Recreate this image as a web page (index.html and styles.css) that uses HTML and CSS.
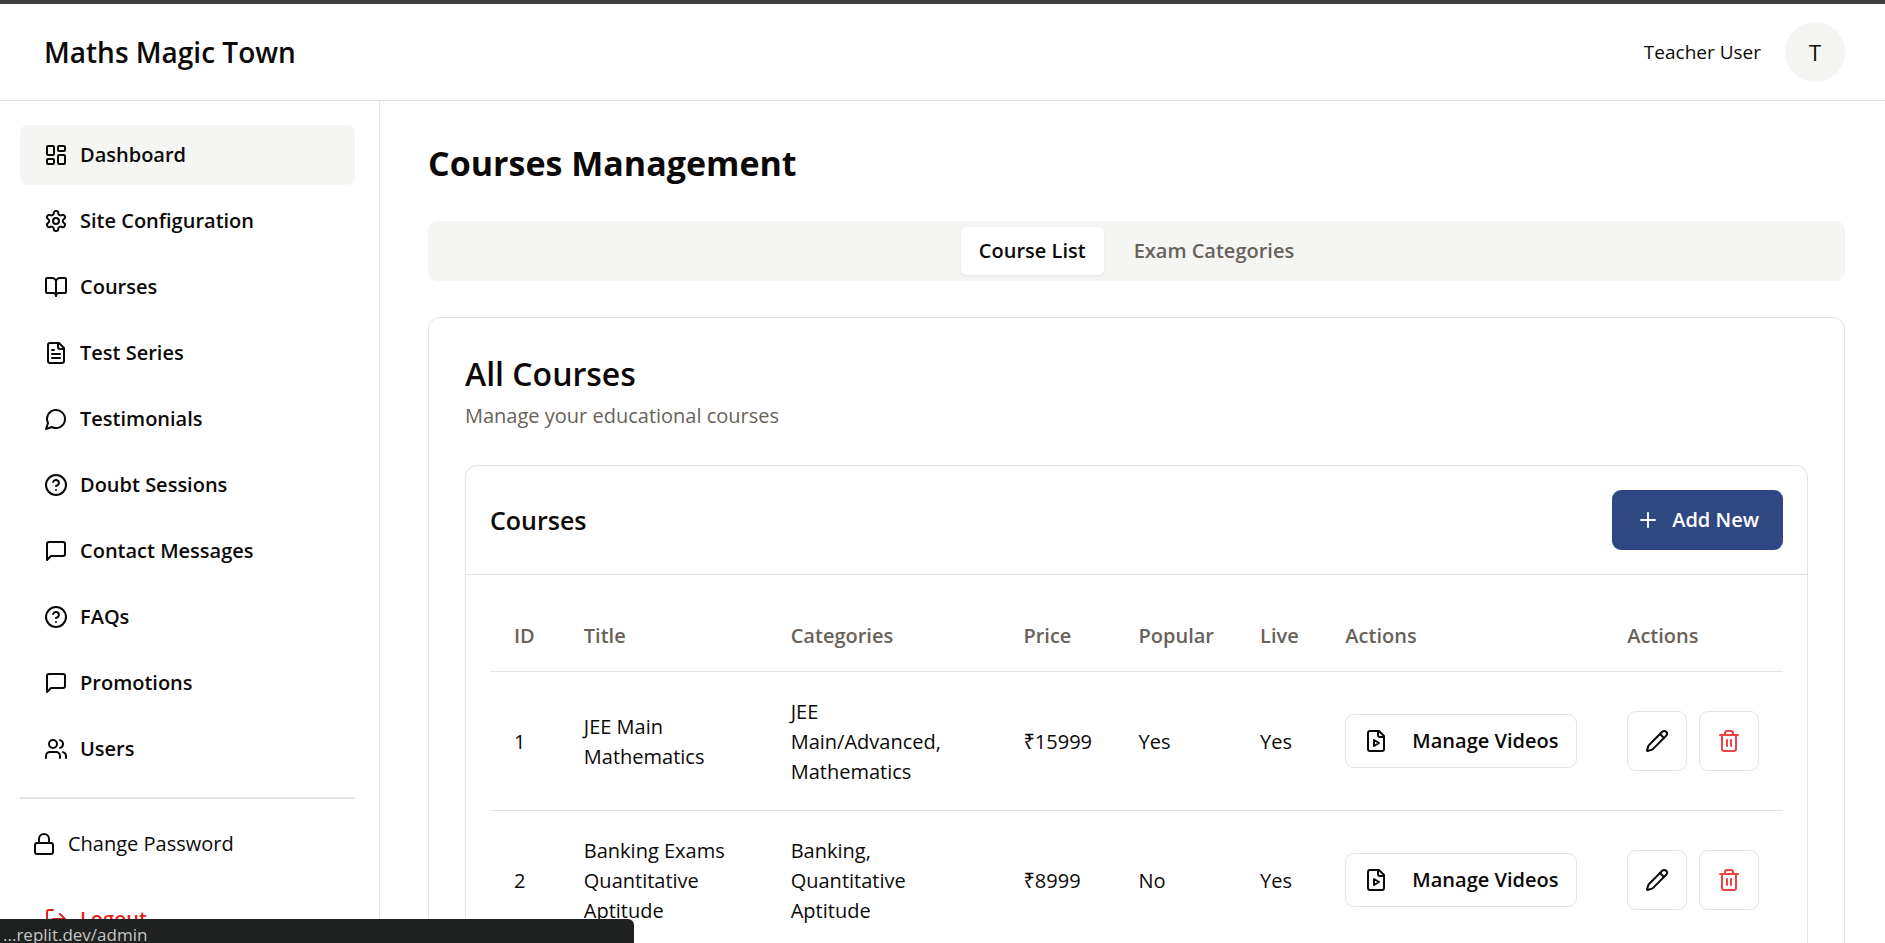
FILE: index.html
```html
<!DOCTYPE html>
<html lang="en">
<head>
<meta charset="utf-8">
<title>Maths Magic Town</title>
<meta name="viewport" content="width=device-width, initial-scale=1">
<link rel="stylesheet" href="styles.css">
</head>
<body>
<svg class="sprite" aria-hidden="true">
  <symbol id="dashboard" viewBox="0 0 24 24"><rect width="7" height="9" x="3" y="3" rx="1"/><rect width="7" height="5" x="14" y="3" rx="1"/><rect width="7" height="9" x="14" y="12" rx="1"/><rect width="7" height="5" x="3" y="16" rx="1"/></symbol>
  <symbol id="settings" viewBox="0 0 24 24"><path d="M12.22 2h-.44a2 2 0 0 0-2 2v.18a2 2 0 0 1-1 1.73l-.43.25a2 2 0 0 1-2 0l-.15-.08a2 2 0 0 0-2.73.73l-.22.38a2 2 0 0 0 .73 2.73l.15.1a2 2 0 0 1 1 1.72v.51a2 2 0 0 1-1 1.74l-.15.09a2 2 0 0 0-.73 2.73l.22.38a2 2 0 0 0 2.73.73l.15-.08a2 2 0 0 1 2 0l.43.25a2 2 0 0 1 1 1.73V20a2 2 0 0 0 2 2h.44a2 2 0 0 0 2-2v-.18a2 2 0 0 1 1-1.73l.43-.25a2 2 0 0 1 2 0l.15.08a2 2 0 0 0 2.73-.73l.22-.39a2 2 0 0 0-.73-2.73l-.15-.08a2 2 0 0 1-1-1.74v-.5a2 2 0 0 1 1-1.74l.15-.09a2 2 0 0 0 .73-2.73l-.22-.38a2 2 0 0 0-2.73-.73l-.15.08a2 2 0 0 1-2 0l-.43-.25a2 2 0 0 1-1-1.73V4a2 2 0 0 0-2-2z"/><circle cx="12" cy="12" r="3"/></symbol>
  <symbol id="book" viewBox="0 0 24 24"><path d="M12 7v14"/><path d="M3 18a1 1 0 0 1-1-1V4a1 1 0 0 1 1-1h5a4 4 0 0 1 4 4 4 4 0 0 1 4-4h5a1 1 0 0 1 1 1v13a1 1 0 0 1-1 1h-6a3 3 0 0 0-3 3 3 3 0 0 0-3-3z"/></symbol>
  <symbol id="file-text" viewBox="0 0 24 24"><path d="M15 2H6a2 2 0 0 0-2 2v16a2 2 0 0 0 2 2h12a2 2 0 0 0 2-2V7Z"/><path d="M14 2v4a2 2 0 0 0 2 2h4"/><path d="M10 9H8"/><path d="M16 13H8"/><path d="M16 17H8"/></symbol>
  <symbol id="bubble" viewBox="0 0 24 24"><path d="M7.9 20A9 9 0 1 0 4 16.1L2 22Z"/></symbol>
  <symbol id="help" viewBox="0 0 24 24"><circle cx="12" cy="12" r="10"/><path d="M9.09 9a3 3 0 0 1 5.83 1c0 2-3 3-3 3"/><path d="M12 17h.01"/></symbol>
  <symbol id="message" viewBox="0 0 24 24"><path d="M21 15a2 2 0 0 1-2 2H7l-4 4V5a2 2 0 0 1 2-2h14a2 2 0 0 1 2 2z"/></symbol>
  <symbol id="users" viewBox="0 0 24 24"><path d="M16 21v-2a4 4 0 0 0-4-4H6a4 4 0 0 0-4 4v2"/><circle cx="9" cy="7" r="4"/><path d="M22 21v-2a4 4 0 0 0-3-3.87"/><path d="M16 3.13a4 4 0 0 1 0 7.75"/></symbol>
  <symbol id="lock" viewBox="0 0 24 24"><rect width="18" height="11" x="3" y="11" rx="2"/><path d="M7 11V7a5 5 0 0 1 10 0v4"/></symbol>
  <symbol id="logout" viewBox="0 0 24 24"><path d="M9 21H5a2 2 0 0 1-2-2V5a2 2 0 0 1 2-2h4"/><path d="m16 17 5-5-5-5"/><path d="M21 12H9"/></symbol>
  <symbol id="plus" viewBox="0 0 24 24"><path d="M5 12h14"/><path d="M12 5v14"/></symbol>
  <symbol id="file-video" viewBox="0 0 24 24"><path d="M15 2H6a2 2 0 0 0-2 2v16a2 2 0 0 0 2 2h12a2 2 0 0 0 2-2V7Z"/><path d="M14 2v4a2 2 0 0 0 2 2h4"/><path d="m10 11 5 3-5 3v-6Z"/></symbol>
  <symbol id="pencil" viewBox="0 0 24 24"><path d="M21.174 6.812a1 1 0 0 0-3.986-3.987L3.842 16.174a2 2 0 0 0-.5.83l-1.321 4.352a.5.5 0 0 0 .623.622l4.353-1.32a2 2 0 0 0 .83-.497z"/><path d="m15 5 4 4"/></symbol>
  <symbol id="trash" viewBox="0 0 24 24"><path d="M3 6h18"/><path d="M19 6v14a2 2 0 0 1-2 2H7a2 2 0 0 1-2-2V6"/><path d="M8 6V4a2 2 0 0 1 2-2h4a2 2 0 0 1 2 2v2"/><path d="M10 11v6"/><path d="M14 11v6"/></symbol>
</svg>

<div class="app">
  <header class="topbar">
    <h1 class="brand">Maths Magic Town</h1>
    <div class="account">
      <span>Teacher User</span>
      <span class="avatar">T</span>
    </div>
  </header>

  <div class="body">
    <aside class="sidebar">
      <nav class="nav" aria-label="Admin">
        <a class="nav-item active" href="#dashboard"><svg class="icon"><use href="#dashboard"/></svg>Dashboard</a>
        <a class="nav-item" href="#site"><svg class="icon"><use href="#settings"/></svg>Site Configuration</a>
        <a class="nav-item" href="#courses"><svg class="icon"><use href="#book"/></svg>Courses</a>
        <a class="nav-item" href="#tests"><svg class="icon"><use href="#file-text"/></svg>Test Series</a>
        <a class="nav-item" href="#testimonials"><svg class="icon"><use href="#bubble"/></svg>Testimonials</a>
        <a class="nav-item" href="#doubts"><svg class="icon"><use href="#help"/></svg>Doubt Sessions</a>
        <a class="nav-item" href="#contact"><svg class="icon"><use href="#message"/></svg>Contact Messages</a>
        <a class="nav-item" href="#faqs"><svg class="icon"><use href="#help"/></svg>FAQs</a>
        <a class="nav-item" href="#promotions"><svg class="icon"><use href="#message"/></svg>Promotions</a>
        <a class="nav-item" href="#people"><svg class="icon"><use href="#users"/></svg>Users</a>
      </nav>
      <hr class="divider">
      <a class="password" href="#password"><svg class="icon"><use href="#lock"/></svg>Change Password</a>
      <button class="nav-item logout" type="button"><svg class="icon"><use href="#logout"/></svg>Logout</button>
    </aside>

    <main class="main">
      <h2 class="page-title">Courses Management</h2>

      <div class="tabs" role="tablist">
        <button class="tab selected" type="button" role="tab" aria-selected="true">Course List</button>
        <button class="tab" type="button" role="tab" aria-selected="false">Exam Categories</button>
      </div>

      <section class="card outer">
        <h3 class="card-title">All Courses</h3>
        <p class="card-note">Manage your educational courses</p>

        <div class="card">
          <div class="card-head">
            <h4 class="list-title">Courses</h4>
            <button class="btn primary" type="button"><svg class="icon"><use href="#plus"/></svg>Add New</button>
          </div>
          <div class="table-wrap">
            <table class="table">
              <colgroup>
                <col class="c-id"><col class="c-title"><col class="c-cat"><col class="c-price">
                <col class="c-popular"><col class="c-live"><col class="c-videos"><col class="c-edit">
              </colgroup>
              <thead>
                <tr><th>ID</th><th>Title</th><th>Categories</th><th>Price</th><th>Popular</th><th>Live</th><th>Actions</th><th>Actions</th></tr>
              </thead>
              <tbody>
                <tr>
                  <td>1</td><td>JEE Main Mathematics</td><td class="categories">JEE Main/Advanced, Mathematics</td><td>₹15999</td><td>Yes</td><td>Yes</td>
                  <td><button class="btn videos" type="button"><svg class="icon"><use href="#file-video"/></svg>Manage Videos</button></td>
                  <td><div class="actions"><button class="btn square" type="button" aria-label="Edit"><svg class="icon"><use href="#pencil"/></svg></button><button class="btn square danger" type="button" aria-label="Delete"><svg class="icon"><use href="#trash"/></svg></button></div></td>
                </tr>
                <tr>
                  <td>2</td><td>Banking Exams Quantitative Aptitude</td><td class="categories">Banking, Quantitative Aptitude</td><td>₹8999</td><td>No</td><td>Yes</td>
                  <td><button class="btn videos" type="button"><svg class="icon"><use href="#file-video"/></svg>Manage Videos</button></td>
                  <td><div class="actions"><button class="btn square" type="button" aria-label="Edit"><svg class="icon"><use href="#pencil"/></svg></button><button class="btn square danger" type="button" aria-label="Delete"><svg class="icon"><use href="#trash"/></svg></button></div></td>
                </tr>
              </tbody>
            </table>
          </div>
        </div>
      </section>
    </main>
  </div>
</div>
<div class="status">...replit.dev/admin</div>
</body>
</html>
```

FILE: styles.css
```css
:root {
  --text: #0c0a09;
  --muted: #68625a;
  --line: #e4e4e4;
  --soft: #f5f5f4;
  --primary: #2f4783;
  --danger: #ef4444;
}

* { box-sizing: border-box; }

html, body { height: 100%; }

body {
  margin: 0;
  overflow: hidden;
  background: #fff;
  color: var(--text);
  font-family: "Segoe UI", "Open Sans", "Noto Sans", sans-serif;
  font-size: 20px;
  line-height: 30px;
}

h1, h2, h3, h4, p { margin: 0; }

button {
  font: inherit;
  color: inherit;
  background: none;
  border: 0;
  padding: 0;
  cursor: pointer;
}

a { color: inherit; text-decoration: none; }

.sprite { position: absolute; width: 0; height: 0; }

.icon {
  width: 24px;
  height: 24px;
  flex: none;
  fill: none;
  stroke: currentColor;
  stroke-width: 2;
  stroke-linecap: round;
  stroke-linejoin: round;
}

.app {
  display: flex;
  flex-direction: column;
  height: 100%;
  border-top: 4px solid #404040;
}

.topbar {
  display: flex;
  align-items: center;
  justify-content: space-between;
  padding: 18px 40px 18px 44px;
  border-bottom: 1px solid var(--line);
}

.brand { font-size: 28px; line-height: 40px; font-weight: 600; }

.account { display: flex; align-items: center; gap: 24px; font-size: 19px; }

.avatar {
  display: grid;
  place-items: center;
  width: 60px;
  height: 60px;
  border-radius: 50%;
  background: var(--soft);
  font-size: 22px;
}

.body { display: flex; flex: 1; min-height: 0; }

.sidebar {
  flex: none;
  width: 380px;
  padding: 24px;
  padding-left: 20px;
  border-right: 1px solid var(--line);
  overflow: hidden;
}

.nav { display: flex; flex-direction: column; gap: 6px; }

.nav-item {
  display: flex;
  align-items: center;
  gap: 12px;
  width: 100%;
  height: 60px;
  padding: 0 24px;
  border-radius: 8px;
  font-weight: 600;
}

.nav-item.active { background: var(--soft); }

.divider { margin: 18px 0 20px; border: 0; height: 2px; background: var(--line); }

.password {
  display: flex;
  align-items: center;
  gap: 12px;
  padding: 10px 12px;
}

.logout { margin-top: 20px; color: #e02424; }

.main { flex: 1; min-width: 0; padding: 35px 40px 0 48px; overflow: hidden; }

.page-title { font-size: 34px; line-height: 54px; font-weight: 700; }

.tabs {
  display: flex;
  justify-content: center;
  gap: 12px;
  margin-top: 31px;
  padding: 6px;
  border-radius: 9px;
  background: var(--soft);
}

.tab {
  padding: 9px 18px;
  border-radius: 6px;
  font-weight: 600;
  color: var(--muted);
}

.tab.selected {
  background: #fff;
  color: var(--text);
  box-shadow: 0 1px 3px rgba(0, 0, 0, .06);
}

.card {
  border: 1px solid var(--line);
  border-radius: 12px;
  box-shadow: 0 1px 2px rgba(0, 0, 0, .04);
}

.outer { margin-top: 36px; padding: 36px; }

.card-title { font-size: 32px; line-height: 40px; font-weight: 600; }

.card-note { margin: 7px 0 34px; line-height: 30px; color: var(--muted); }

.card-head {
  display: flex;
  align-items: center;
  justify-content: space-between;
  padding: 24px;
  border-bottom: 1px solid var(--line);
}

.list-title { font-size: 25px; line-height: 36px; font-weight: 600; }

.btn {
  display: inline-flex;
  align-items: center;
  justify-content: center;
  gap: 12px;
  border-radius: 9px;
  font-weight: 600;
}

.primary { height: 60px; padding: 0 24px; background: var(--primary); color: #fff; }

.videos {
  gap: 24px;
  height: 54px;
  padding: 0 18px;
  border: 1px solid var(--line);
  white-space: nowrap;
}

.square { width: 60px; height: 60px; border: 1px solid var(--line); }

.danger { color: var(--danger); }

.table-wrap { padding: 24px; }

.table { width: 100%; border-collapse: collapse; table-layout: fixed; }

.table th {
  height: 72px;
  padding: 2px 24px 0;
  text-align: left;
  font-weight: 600;
  color: var(--muted);
}

.table td { padding: 25px 24px 23px; vertical-align: middle; }

.table td.categories { padding-right: 36px; }

.table td:nth-child(n + 7) { padding-top: 0; padding-bottom: 0; }

.table tr { border-bottom: 1px solid var(--line); }

.c-id { width: 5.4%; }
.c-title { width: 16%; }
.c-cat { width: 18%; }
.c-price { width: 8.9%; }
.c-popular { width: 9.4%; }
.c-live { width: 6.6%; }
.c-videos { width: 21.8%; }
.c-edit { width: 13.9%; }

.actions { display: flex; gap: 12px; }

.status {
  position: fixed;
  left: 0;
  bottom: 0;
  width: 634px;
  height: 24px;
  padding: 0 3px;
  overflow: hidden;
  border-radius: 0 6px 0 0;
  background: #1f2020;
  color: #c4c7c5;
  font-size: 17px;
  line-height: 32px;
}
```
